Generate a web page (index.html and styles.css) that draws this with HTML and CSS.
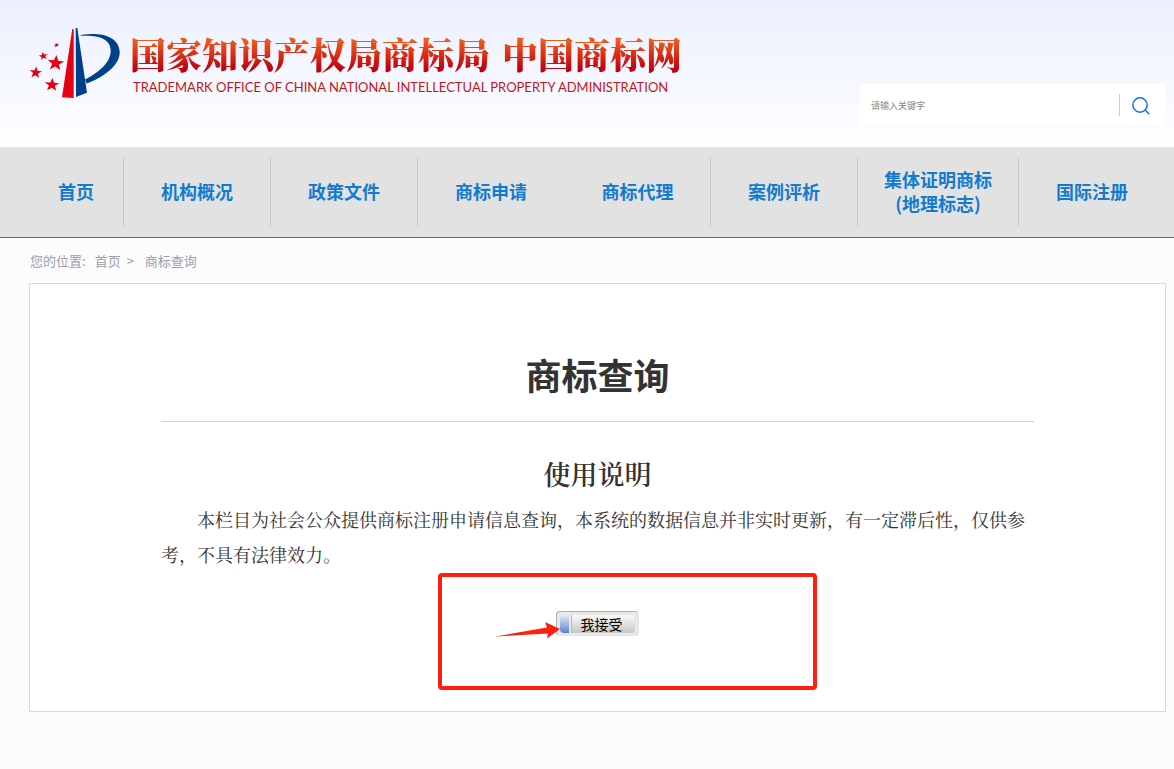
FILE: index.html
```
<!DOCTYPE html>
<html lang="zh-CN">
<head>
    <meta charset="UTF-8">
    <meta name="viewport" content="width=device-width, initial-scale=1.0">
    <title>商标查询 - 中国商标网</title>
    <link rel="stylesheet" href="styles.css">
</head>
<body>

<header class="header">
    <a class="logo" href="#">
        <svg class="logo-mark" viewBox="0 0 92 72" width="92" height="72" aria-hidden="true">
            <defs>
                <polygon id="star" points="0,-10 2.600,-3.200 10,-3 4,1.400 6.200,8.500 0,4.400 -6.200,8.500 -4,1.400 -10,-3 -2.600,-3.200"/>
            </defs>
            <path fill="#e60012" d="M43.300 1 H44.700 V70 L33 69.300Z"/>
            <path fill="#00408a" d="M46.700 0 H48.300 L58 64.700 L47 69Z"/>
            <path fill="#00408a" d="M51.700 7 C68 4.500 89 6 90.700 23.500 C91.500 38 72 50.500 57.700 55.500 L56 51.500 C67 46 81.500 36 81.700 23 C81.500 8 64 7.500 51.700 7.800Z"/>
            <g fill="#e60012">
                <use href="#star" transform="translate(27.500 17) rotate(-20) scale(.3 .22)"/>
                <use href="#star" transform="translate(14.300 28) rotate(-12) scale(.46 .42)"/>
                <use href="#star" transform="translate(26.700 35) rotate(6) scale(.84 .8)"/>
                <use href="#star" transform="translate(6.700 44.500) rotate(6) scale(.62 .6)"/>
                <use href="#star" transform="translate(23 56.700) rotate(4) scale(.74 .68)"/>
            </g>
        </svg>
        <span class="logo-text">
            <span class="logo-cn"><span>国家知识产权局商标局</span><span>中国商标网</span></span>
            <span class="logo-en">TRADEMARK OFFICE OF CHINA NATIONAL INTELLECTUAL PROPERTY ADMINISTRATION</span>
        </span>
    </a>
    <form class="search">
        <input type="text" class="search-input" placeholder="请输入关键字" aria-label="请输入关键字">
        <button type="submit" class="search-btn" aria-label="搜索">
            <svg viewBox="0 0 18 18" width="18" height="18" fill="none" stroke="#0f6bf0" stroke-width="1.4">
                <circle cx="8" cy="8" r="7.200"/>
                <path d="M13 13 L17.300 17.300"/>
            </svg>
        </button>
    </form>
</header>

<nav class="nav">
    <ul class="nav-list">
        <li><a href="#">首页</a></li>
        <li><a href="#">机构概况</a></li>
        <li><a href="#">政策文件</a></li>
        <li class="no-line"><a href="#">商标申请</a></li>
        <li><a href="#">商标代理</a></li>
        <li><a href="#">案例评析</a></li>
        <li><a href="#">集体证明商标<br>(地理标志)</a></li>
        <li class="no-line"><a href="#">国际注册</a></li>
    </ul>
</nav>

<div class="breadcrumb">
    <span>您的位置:</span>
    <a href="#">首页</a>
    <span class="sep">&gt;</span>
    <a href="#">商标查询</a>
</div>

<main class="panel">
    <h1>商标查询</h1>
    <h2>使用说明</h2>
    <p>本栏目为社会公众提供商标注册申请信息查询，本系统的数据信息并非实时更新，有一定滞后性，仅供参考，不具有法律效力。</p>
    <div class="accept">
        <button type="button" class="accept-btn"><span>我接受</span></button>
        <div class="highlight"></div>
        <svg class="arrow" viewBox="0 0 66 18" width="66" height="18" aria-hidden="true">
            <path fill="#ff1f12" d="M0 15.500 L52 6.500 L50 1 L65 8 L52 17.500 L53 12.500Z"/>
        </svg>
    </div>
</main>

</body>
</html>
```
FILE: styles.css
```
* {
    box-sizing: border-box;
}

body {
    margin: 0;
    background: #fcfcfc;
    font-family: "Noto Sans CJK SC", sans-serif;
    color: #333;
}

a {
    color: inherit;
    text-decoration: none;
}

.header {
    display: flex;
    justify-content: space-between;
    height: 147px;
    padding: 28px 9px 0 29px;
    background: linear-gradient(#ecf0fe, #fdfeff);
}

.logo {
    display: flex;
    gap: 9px;
}

.logo-text {
    padding-top: 4px;
}

.logo-cn {
    display: flex;
    gap: 12px;
    font-family: "Noto Serif CJK SC", "Noto Sans CJK SC", serif;
    font-size: 36px;
    font-weight: 900;
    line-height: 44px;
    white-space: nowrap;
    background: linear-gradient(#ee5a1c 20%, #c00010 85%);
    -webkit-background-clip: text;
    background-clip: text;
    color: transparent;
}

.logo-en {
    display: block;
    padding-left: 3px;
    font-family: Lato, sans-serif;
    font-size: 13px;
    line-height: 22px;
    white-space: nowrap;
    color: #c3161c;
}

.search {
    display: flex;
    align-items: center;
    width: 305px;
    height: 42px;
    margin-top: 56px;
    background: #fff;
}

.search-input {
    flex: 1;
    min-width: 0;
    height: 22px;
    padding: 0 11px;
    border: 0;
    border-right: 1px solid #ccc;
    outline: none;
    font-family: inherit;
    font-size: 9px;
}

.search-input::placeholder {
    color: #888;
}

.search-btn {
    display: flex;
    align-items: center;
    justify-content: center;
    width: 45px;
    height: 42px;
    padding: 2px 3px 0 0;
    border: 0;
    background: none;
    cursor: pointer;
}

.nav {
    padding: 11px 8px 11px 29px;
    background: #e2e2e2;
    border-bottom: 1px solid #2a78b4;
}

.nav-list {
    display: grid;
    grid-template-columns: 95fr 147fr 147fr 147fr 146fr 147fr 161fr 147fr;
    margin: 0;
    padding: 0;
    list-style: none;
}

.nav-list li {
    display: flex;
    align-items: center;
    justify-content: center;
    height: 68px;
    padding-bottom: 2px;
    border-right: 1px solid #c5c8d2;
    font-size: 18px;
    font-weight: 700;
    line-height: 24px;
    text-align: center;
    color: #127bd0;
}

.nav-list .no-line {
    border-right-color: transparent;
}

.breadcrumb {
    display: flex;
    gap: 9px;
    padding: 11px 30px 10px;
    font-size: 13px;
    line-height: 24px;
    color: #9a9fab;
}

.breadcrumb .sep {
    margin: 0 2px 0 -3px;
}

.panel {
    margin: 0 8px 57px 29px;
    padding: 66px 131px 75px;
    border: 1px solid #d5dbe3;
    background: #fff;
}

h1 {
    margin: 0;
    padding-bottom: 23px;
    border-bottom: 1px solid #d3d3d3;
    font-size: 36px;
    line-height: 48px;
    text-align: center;
}

h2 {
    margin: 34px 0 10px;
    font-family: "Noto Serif CJK SC", "Noto Sans CJK SC", serif;
    font-size: 27px;
    font-weight: 600;
    line-height: 36px;
    text-align: center;
}

p {
    margin: 0;
    font-family: "Noto Serif CJK SC", "Noto Sans CJK SC", serif;
    font-size: 18px;
    font-weight: 400;
    line-height: 35px;
    text-indent: 2em;
}

.accept {
    position: relative;
    display: flex;
    justify-content: center;
    margin-top: 39px;
}

.accept-btn {
    display: flex;
    width: 83px;
    height: 25px;
    padding: 3px;
    border: 1px solid #c4c4c4;
    border-color: #b0b0b0 #e4e4e4 #e4e4e4 #b0b0b0;
    border-radius: 4px;
    background: #e8e8e8;
    font-family: inherit;
    font-size: 14px;
    line-height: 18px;
    color: #000;
    cursor: pointer;
}

.accept-btn::before {
    content: "";
    width: 9px;
    height: 18px;
    margin-right: 2px;
    border-radius: 4px 0 0 4px;
    background: linear-gradient(#e4ebf8, #5b80d6);
}

.accept-btn span {
    flex: 1;
    height: 18px;
    padding-right: 4px;
    border-left: 1px solid #bbb;
    border-radius: 0 4px 4px 0;
    background: linear-gradient(#fafafa, #c6c6c6);
}

/* red marker around the accept button */
.highlight {
    position: absolute;
    top: -38px;
    left: calc(50% - 160px);
    width: 379px;
    height: 117px;
    border: 4px solid #ff1f12;
    border-radius: 4px;
    pointer-events: none;
}

.arrow {
    position: absolute;
    top: 10px;
    left: calc(50% - 103px);
    pointer-events: none;
}
```
